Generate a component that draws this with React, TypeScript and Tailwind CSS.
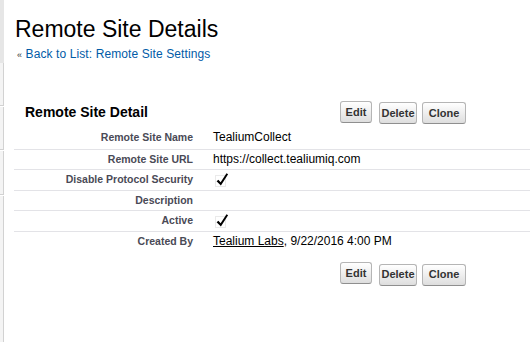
import React from 'react'

const font = { fontFamily: '"Liberation Sans", Arial, Helvetica, sans-serif' }

function Btn({ label, w }: { label: string; w: string }) {
  return (
    <button
      className={`h-[22px] ${w} rounded-[3px] border border-[#b5b5b5] border-b-[#8f8f8f] bg-gradient-to-b from-white to-[#dedede] text-[11px] font-bold text-[#333] leading-none`}
    >
      {label}
    </button>
  )
}

function Buttons() {
  return (
    <div className="flex items-center">
      <Btn label="Edit" w="w-[32px]" />
      <div className="ml-[7px]">
        <Btn label="Delete" w="w-[38px]" />
      </div>
      <div className="ml-[5px]">
        <Btn label="Clone" w="w-[44px]" />
      </div>
    </div>
  )
}

function Check() {
  return (
    <svg width="16" height="16" viewBox="0 0 16 16" className="mt-[1px] ml-[2px]">
      <rect x="0.5" y="3.5" width="10" height="11" fill="none" stroke="#d4d4d4" strokeDasharray="1 1" />
      <path d="M1.6 9.2 L3.4 7.7 L5.6 10.3 L11.5 1.2 L13.1 2.3 L5.9 13.6 Z" fill="#000" />
    </svg>
  )
}

const rows: { label: string; h: string; value: React.ReactNode; last?: boolean }[] = [
  { label: 'Remote Site Name', h: 'h-[21px]', value: 'TealiumCollect' },
  { label: 'Remote Site URL', h: 'h-[19px]', value: 'https://collect.tealiumiq.com' },
  { label: 'Disable Protocol Security', h: 'h-[20px]', value: <Check /> },
  { label: 'Description', h: 'h-[19px]', value: '' },
  { label: 'Active', h: 'h-[20px]', value: <Check /> },
  {
    label: 'Created By',
    h: 'h-[20px]',
    last: true,
    value: (
      <span>
        <span className="underline">Tealium Labs</span>, 9/22/2016 4:00 PM
      </span>
    ),
  },
]

export default function App() {
  return (
    <div className="flex h-[342px] w-[530px] overflow-hidden bg-white" style={font}>
      {/* left sidebar edge */}
      <div className="flex w-[4px] flex-col">
        <div className="h-[63px] bg-[#e6e6e6]" />
        <div className="h-[43px] border-r border-b border-[#d2d2d2] bg-[#f4f4f4]" />
        <div className="mt-[1px] h-[43px] border-r border-b border-[#d2d2d2] bg-[#f4f4f4]" />
        <div className="mt-[1px] h-[44px] border-r border-b border-[#d2d2d2] bg-[#f4f4f4]" />
        <div className="mt-[1px] flex-1 border-r border-[#d2d2d2] bg-[#f4f4f4]" />
      </div>

      <div className="flex-1">
        <h1 className="pl-[11px] pt-[16px] text-[23px] leading-[26px] font-normal text-black">
          Remote Site Details
        </h1>
        <div className="mt-[4px] pl-[13px] text-[12px] leading-[16px] tracking-[0.1px]">
          <span className="text-[9px] text-[#333]">«</span>{' '}
          <a className="text-[#015ba7]">Back to List: Remote Site Settings</a>
        </div>

        <div className="ml-[10px] mt-[38px]">
          <div className="flex h-[22px] items-center">
            <h2 className="w-[326px] pl-[11px] text-[14px] font-bold text-black">Remote Site Detail</h2>
            <Buttons />
          </div>

          <div className="mt-[5px]">
            {rows.map((r) => (
              <div
                key={r.label}
                className={`flex ${r.h} ${r.last ? '' : 'border-b border-[#e3e3e7]'} box-content`}
              >
                <div className="w-[189px] pt-[1px] pr-[10px] text-right text-[10.5px] leading-[16px] font-bold text-[#4a4a56]">
                  {r.label}
                </div>
                <div className="pl-[10px] pt-[1px] text-[12px] leading-[16px] text-black">{r.value}</div>
              </div>
            ))}
          </div>

          <div className="mt-[9px] pl-[326px]">
            <Buttons />
          </div>
        </div>
      </div>
    </div>
  )
}
